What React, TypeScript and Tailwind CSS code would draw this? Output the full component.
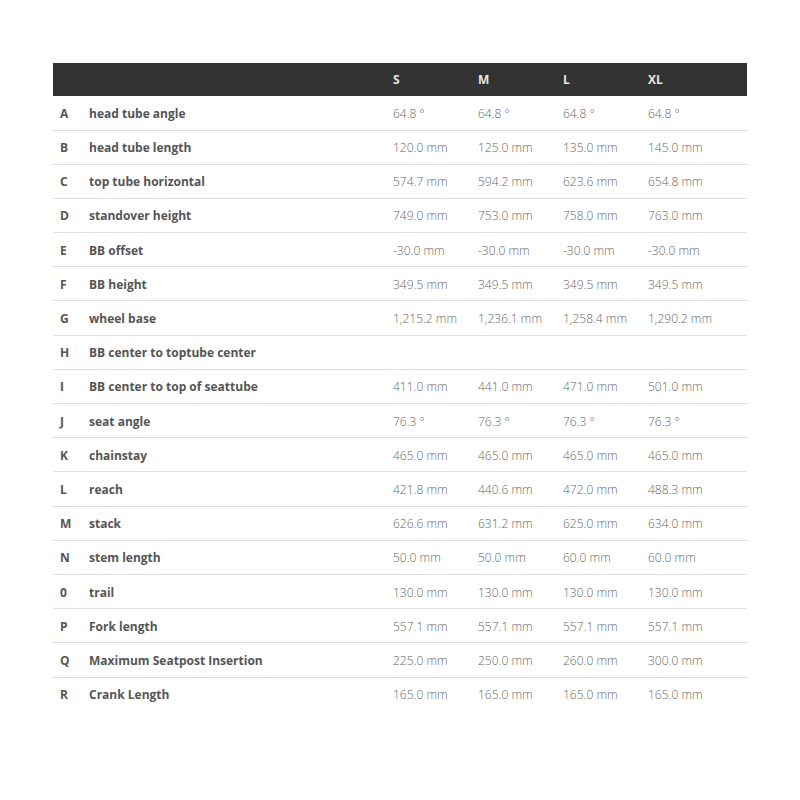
import React from 'react';

const sizes = ['S', 'M', 'L', 'XL'];

const rows: [string, string, string[]][] = [
  ['A', 'head tube angle', ['64.8 °', '64.8 °', '64.8 °', '64.8 °']],
  ['B', 'head tube length', ['120.0 mm', '125.0 mm', '135.0 mm', '145.0 mm']],
  ['C', 'top tube horizontal', ['574.7 mm', '594.2 mm', '623.6 mm', '654.8 mm']],
  ['D', 'standover height', ['749.0 mm', '753.0 mm', '758.0 mm', '763.0 mm']],
  ['E', 'BB offset', ['-30.0 mm', '-30.0 mm', '-30.0 mm', '-30.0 mm']],
  ['F', 'BB height', ['349.5 mm', '349.5 mm', '349.5 mm', '349.5 mm']],
  ['G', 'wheel base', ['1,215.2 mm', '1,236.1 mm', '1,258.4 mm', '1,290.2 mm']],
  ['H', 'BB center to toptube center', ['', '', '', '']],
  ['I', 'BB center to top of seattube', ['411.0 mm', '441.0 mm', '471.0 mm', '501.0 mm']],
  ['J', 'seat angle', ['76.3 °', '76.3 °', '76.3 °', '76.3 °']],
  ['K', 'chainstay', ['465.0 mm', '465.0 mm', '465.0 mm', '465.0 mm']],
  ['L', 'reach', ['421.8 mm', '440.6 mm', '472.0 mm', '488.3 mm']],
  ['M', 'stack', ['626.6 mm', '631.2 mm', '625.0 mm', '634.0 mm']],
  ['N', 'stem length', ['50.0 mm', '50.0 mm', '60.0 mm', '60.0 mm']],
  ['0', 'trail', ['130.0 mm', '130.0 mm', '130.0 mm', '130.0 mm']],
  ['P', 'Fork length', ['557.1 mm', '557.1 mm', '557.1 mm', '557.1 mm']],
  ['Q', 'Maximum Seatpost Insertion', ['225.0 mm', '250.0 mm', '260.0 mm', '300.0 mm']],
  ['R', 'Crank Length', ['165.0 mm', '165.0 mm', '165.0 mm', '165.0 mm']],
];

export default function App() {
  return (
    <div className="min-h-[800px] bg-white pt-[63px] px-[53px] font-['Open_Sans',sans-serif] text-[12px]">
      <table className="w-[694px] border-collapse table-fixed">
        <colgroup>
          <col className="w-[29px]" />
          <col className="w-[304px]" />
          <col className="w-[85px]" />
          <col className="w-[85px]" />
          <col className="w-[85px]" />
          <col />
        </colgroup>
        <thead className="bg-[#333333]">
          <tr className="h-[33px]">
            <th className="px-[7px]" />
            <th className="px-[7px]" />
            {sizes.map((s) => (
              <th key={s} className="px-[7px] text-left font-bold text-[#e6e6e6]">
                {s}
              </th>
            ))}
          </tr>
        </thead>
        <tbody>
          {rows.map(([letter, label, values], i) => (
            <tr key={letter} className={i === 0 ? 'h-[34px]' : 'h-[34.2px] border-t border-[#dddddd]'}>
              <td className="px-[7px] pt-[2px] font-bold text-[#555555]">{letter}</td>
              <td className="px-[7px] pt-[2px] font-bold text-[#555555]">{label}</td>
              {values.map((v, j) => (
                <td key={j} className="px-[7px] pt-[2px] font-light text-[#666666]">
                  {v}
                </td>
              ))}
            </tr>
          ))}
        </tbody>
      </table>
    </div>
  );
}
